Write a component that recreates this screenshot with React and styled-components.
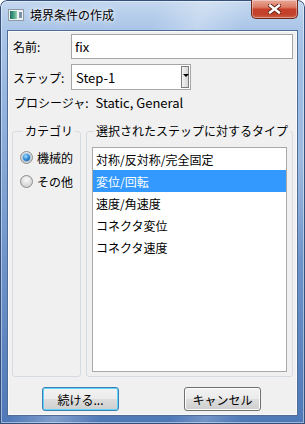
import React from "react";
import styled, { createGlobalStyle } from "styled-components";

const Global = createGlobalStyle`
  html, body { margin: 0; padding: 0; background: #ffffff; }
  body { font-family: "Noto Sans CJK JP", "Noto Sans", sans-serif; color: #000; }
  #root { width: 305px; height: 424px; }
`;

const Window = styled.div`
  box-sizing: border-box;
  width: 305px;
  height: 424px;
  display: flex;
  flex-direction: column;
  padding: 0 7px 8px 7px;
  border-radius: 7px 7px 0 0;
  background:
    linear-gradient(110deg, rgba(255,255,255,0) 35%, rgba(255,255,255,0.28) 45%, rgba(255,255,255,0) 55%, rgba(255,255,255,0) 70%, rgba(255,255,255,0.2) 78%, rgba(255,255,255,0) 86%),
    linear-gradient(180deg, #c4d8ef 0px, #abc6e8 28px, #93b3de 110px, #6f94ca 260px, #4f78b7 424px);
  box-shadow: inset 0 0 0 1px #34507c, inset 0 0 0 2px rgba(255,255,255,0.45);
`;

const TitleBar = styled.div`
  height: 30px;
  flex: none;
  display: flex;
  align-items: center;
`;

const TitleIcon = styled.svg`
  margin-left: 1px;
  flex: none;
`;

const TitleText = styled.div`
  margin-left: 6px;
  font-size: 12px;
  line-height: 14px;
  text-shadow: 0 0 6px rgba(255,255,255,0.9), 0 0 3px rgba(255,255,255,0.9);
`;

const CloseButton = styled.div`
  box-sizing: border-box;
  align-self: flex-start;
  margin-left: auto;
  width: 47px;
  height: 19px;
  border: 1px solid #6d2b20;
  border-top: none;
  border-radius: 0 0 5px 5px;
  background: linear-gradient(180deg, #e9a999 0%, #db7a63 40%, #c7402a 52%, #c2412a 80%, #cf634a 100%);
  box-shadow: inset 0 0 0 1px rgba(255,255,255,0.35);
  display: flex;
  align-items: center;
  justify-content: center;
`;

const Client = styled.div`
  flex: 1;
  display: flex;
  flex-direction: column;
  padding: 0 4px;
  background: #f0f0f0;
  border: 1px solid #4f6c96;
  box-shadow: inset 0 0 0 1px #fafafa;
  font-size: 12px;
`;

const FieldRow = styled.div`
  display: grid;
  grid-template-columns: 59px 1fr;
  align-items: center;
  height: ${(p) => p.$h}px;
  margin-top: ${(p) => p.$mt}px;
  flex: none;
`;

const Label = styled.span`
  padding-left: 1px;
  font-size: 12px;
  white-space: nowrap;
`;

const TextBox = styled.div`
  box-sizing: border-box;
  height: 100%;
  border: 1px solid #a6a6a6;
  background: #fff;
  padding-left: 3px;
  display: flex;
  align-items: center;
  font-size: 13px;
`;

const Select = styled.div`
  box-sizing: border-box;
  width: 120px;
  height: 100%;
  border: 1px solid #a6a6a6;
  background: #fff;
  padding-left: 4px;
  display: flex;
  align-items: center;
  font-size: 13px;
`;

const SelectValue = styled.span`
  flex: 1;
`;

const DropButton = styled.span`
  box-sizing: border-box;
  width: 8px;
  height: 22px;
  margin-right: 1px;
  border: 1px solid #7e7e7e;
  background: linear-gradient(90deg, #f4f4f4, #d6d6d6);
  display: flex;
  justify-content: flex-end;
  align-items: center;
  padding-bottom: 3px;
  &::after {
    content: "";
    width: 0;
    height: 0;
    border-left: 3px solid transparent;
    border-right: 3px solid transparent;
    border-top: 3px solid #000;
    margin-right: -1px;
  }
`;

const ProcRow = styled.div`
  height: 24px;
  flex: none;
  display: flex;
  align-items: center;
  padding-left: 1px;
`;

const ProcValue = styled.span`
  margin-left: 7px;
  font-size: 13px;
`;

const Groups = styled.div`
  display: flex;
  gap: 5px;
  height: 253px;
  margin-top: 10px;
  flex: none;
`;

const Group = styled.fieldset`
  box-sizing: border-box;
  margin: 0;
  padding: 0;
  min-width: 0;
  border: 1px solid #d5dbe0;
  border-radius: 3px;
  width: ${(p) => (p.$w ? `${p.$w}px` : "auto")};
  flex: ${(p) => (p.$w ? "none" : "1")};
  display: flex;
  flex-direction: column;
`;

const Legend = styled.legend`
  margin-left: ${(p) => p.$ml}px;
  padding: 0 2px;
  font-size: 12px;
  line-height: 14px;
  white-space: nowrap;
`;

const RadioList = styled.div`
  display: flex;
  flex-direction: column;
  padding: 7px 0 0 7px;
`;

const RadioRow = styled.div`
  height: 24px;
  display: flex;
  align-items: center;
  gap: 4px;
`;

const Radio = styled.span`
  box-sizing: border-box;
  width: 13px;
  height: 13px;
  border-radius: 50%;
  border: 1px solid #8c8c8c;
  background: radial-gradient(circle at 50% 35%, #fafafa 0%, #e2e2e2 45%, #c4c4c4 100%);
  display: flex;
  align-items: center;
  justify-content: center;
  flex: none;
  &::after {
    content: "";
    display: ${(p) => (p.$checked ? "block" : "none")};
    width: 7px;
    height: 7px;
    border-radius: 50%;
    background: radial-gradient(circle at 40% 35%, #a6e2ff 0%, #3591dc 45%, #0c3c7c 100%);
    box-shadow: 0 0 0 1px rgba(80, 160, 230, 0.45);
  }
`;

const ListWrap = styled.div`
  flex: 1;
  display: flex;
  padding: 9px 5px 4px 5px;
`;

const ListBox = styled.div`
  flex: 1;
  border: 1px solid #a9a9a9;
  background: #fff;
  display: flex;
  flex-direction: column;
`;

const ListItem = styled.div`
  height: 22px;
  flex: none;
  display: flex;
  align-items: center;
  padding-left: 3px;
  background: ${(p) => (p.$selected ? "#3399ff" : "transparent")};
  color: ${(p) => (p.$selected ? "#ffffff" : "#000000")};
`;

const ButtonRow = styled.div`
  display: flex;
  gap: 65px;
  padding-left: 30px;
  height: 24px;
  margin-top: 10px;
  flex: none;
`;

const Button = styled.div`
  box-sizing: border-box;
  width: 77px;
  height: 24px;
  display: flex;
  align-items: center;
  justify-content: center;
  border: 1px solid ${(p) => (p.$default ? "#3c7fb1" : "#707070")};
  border-radius: 3px;
  background: linear-gradient(180deg, #f2f2f2 0%, #ebebeb 50%, #dddddd 51%, #cfcfcf 100%);
  box-shadow: inset 0 0 0 1px ${(p) => (p.$default ? "#5fd3fb" : "#fcfcfc")};
  font-size: 12px;
`;

const items = [
  "対称/反対称/完全固定",
  "変位/回転",
  "速度/角速度",
  "コネクタ変位",
  "コネクタ速度",
];

export default function App() {
  return (
    <>
      <Global />
      <Window>
        <TitleBar>
          <TitleIcon width="16" height="12" viewBox="0 0 16 12">
            <defs>
              <linearGradient id="ig" x1="0" y1="0" x2="1" y2="0">
                <stop offset="0" stopColor="#1f6f66" />
                <stop offset="0.6" stopColor="#4fa88a" />
                <stop offset="1" stopColor="#9fd4b0" />
              </linearGradient>
            </defs>
            <rect x="0.5" y="0.5" width="15" height="11" fill="#eef1f3" stroke="#8e9ba6" />
            <rect x="2" y="2" width="7" height="8" fill="url(#ig)" />
            <rect x="11" y="3" width="3" height="6" fill="#7f93a8" />
          </TitleIcon>
          <TitleText>境界条件の作成</TitleText>
          <CloseButton>
            <svg width="13" height="10" viewBox="0 0 13 10">
              <path d="M2 1.5 L11 8.5 M11 1.5 L2 8.5" stroke="#5a1c12" strokeWidth="4.2" strokeLinecap="square" />
              <path d="M2 1.5 L11 8.5 M11 1.5 L2 8.5" stroke="#ffffff" strokeWidth="2.4" strokeLinecap="square" />
            </svg>
          </CloseButton>
        </TitleBar>
        <Client>
          <FieldRow $h={25} $mt={3}>
            <Label>名前:</Label>
            <TextBox>fix</TextBox>
          </FieldRow>
          <FieldRow $h={26} $mt={5}>
            <Label>ステップ:</Label>
            <Select>
              <SelectValue>Step-1</SelectValue>
              <DropButton />
            </Select>
          </FieldRow>
          <ProcRow>
            <Label>プロシージャ:</Label>
            <ProcValue>Static, General</ProcValue>
          </ProcRow>
          <Groups>
            <Group $w={69}>
              <Legend $ml={10}>カテゴリ</Legend>
              <RadioList>
                <RadioRow>
                  <Radio $checked />
                  <span>機械的</span>
                </RadioRow>
                <RadioRow>
                  <Radio />
                  <span>その他</span>
                </RadioRow>
              </RadioList>
            </Group>
            <Group>
              <Legend $ml={7}>選択されたステップに対するタイプ</Legend>
              <ListWrap>
                <ListBox>
                  {items.map((t, i) => (
                    <ListItem key={t} $selected={i === 1}>
                      {t}
                    </ListItem>
                  ))}
                </ListBox>
              </ListWrap>
            </Group>
          </Groups>
          <ButtonRow>
            <Button $default>続ける...</Button>
            <Button>キャンセル</Button>
          </ButtonRow>
        </Client>
      </Window>
    </>
  );
}
